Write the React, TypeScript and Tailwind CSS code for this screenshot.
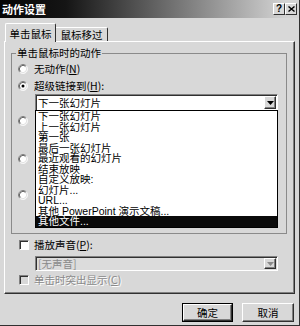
import React from "react";

const Radio = ({ checked }: { checked?: boolean }) => (
  <svg width="10" height="10" viewBox="0 0 12 12" className="shrink-0">
    <circle cx="6" cy="6" r="5" fill="#fff" />
    <path d="M2.11 9.89 A5.5 5.5 0 0 1 9.89 2.11" stroke="#808080" fill="none" strokeWidth="1" />
    <path d="M9.89 2.11 A5.5 5.5 0 0 1 2.11 9.89" stroke="#ffffff" fill="none" strokeWidth="1" />
    <path d="M2.82 9.18 A4.5 4.5 0 0 1 9.18 2.82" stroke="#303030" fill="none" strokeWidth="1" />
    <path d="M9.18 2.82 A4.5 4.5 0 0 1 2.82 9.18" stroke="#d8d8d8" fill="none" strokeWidth="1" />
    {checked && <circle cx="6" cy="6" r="1.8" fill="#000" />}
  </svg>
);

const Check = ({ disabled }: { disabled?: boolean }) => (
  <div
    className={`w-[10px] h-[10px] shrink-0 border-t border-l border-[#808080] border-r border-b border-r-white border-b-white shadow-[inset_1px_1px_0_#303030] ${
      disabled ? "bg-[#d8d8d8]" : "bg-white"
    }`}
  />
);

const Arrow = ({ color }: { color: string }) => (
  <svg width="7" height="4" viewBox="0 0 7 4">
    <path d="M0 0 H7 L3.5 4 Z" fill={color} />
  </svg>
);

const DropBtn = ({ disabled }: { disabled?: boolean }) => (
  <div className="w-[12px] h-full bg-[#d8d8d8] border-t border-l border-white border-r border-b border-r-[#303030] border-b-[#303030] shadow-[inset_-1px_-1px_0_#808080] flex items-center justify-center">
    <Arrow color={disabled ? "#8a8a8a" : "#000"} />
  </div>
);

const items = [
  "下一张幻灯片",
  "上一张幻灯片",
  "第一张",
  "最后一张幻灯片",
  "最近观看的幻灯片",
  "结束放映",
  "自定义放映:",
  "幻灯片...",
  "URL...",
  "其他 PowerPoint 演示文稿...",
  "其他文件...",
];

export default function App() {
  return (
    <div className="w-[300px] h-[326px] bg-[#d8d8d8] flex flex-col font-['Noto_Sans_CJK_SC',sans-serif] text-[10.5px] leading-[12px] text-black border-r border-b border-[#303030] overflow-hidden">
      {/* Title bar */}
      <div className="h-[18px] shrink-0 flex items-center justify-between pl-[2px] pr-[2px] bg-[linear-gradient(to_right,#050505_0%,#151515_22%,#d4d4d4_96%)]">
        <span className="text-white font-bold text-[11px] leading-[12px]">动作设置</span>
        <div className="flex gap-[0px]">
          <div className="w-[12px] h-[12px] bg-[#d8d8d8] border-t border-l border-white border-r border-b border-r-[#303030] border-b-[#303030] flex items-center justify-center font-bold text-[10px] leading-[10px] font-['Liberation_Sans',sans-serif]">
            ?
          </div>
          <div className="w-[12px] h-[12px] bg-[#d8d8d8] border-t border-l border-white border-r border-b border-r-[#303030] border-b-[#303030] flex items-center justify-center">
            <svg width="7" height="6" viewBox="0 0 7 6">
              <path d="M0.5 0.5 L6.5 5.5 M6.5 0.5 L0.5 5.5" stroke="#000" strokeWidth="1.4" />
            </svg>
          </div>
        </div>
      </div>

      {/* Body */}
      <div className="flex-1 flex flex-col pl-[4px] pr-[4px] pt-[5px]">
        {/* Tabs */}
        <div className="h-[18px] flex items-end pl-[1px]">
          <div className="relative z-10 w-[51px] h-[19px] -mb-px bg-[#d8d8d8] border-t border-l border-white border-r border-r-[#303030] rounded-t-[2px] flex items-start justify-center pt-[4px]">
            单击鼠标
          </div>
          <div className="w-[52px] h-[14px] bg-[#d8d8d8] border-t border-white border-r border-r-[#303030] rounded-tr-[2px] flex items-start justify-center pt-[1px]">
            鼠标移过
          </div>
        </div>

        {/* Panel */}
        <div className="h-[253px] border-t border-l border-white border-r border-b border-r-[#303030] border-b-[#303030] shadow-[inset_-1px_-1px_0_#808080] pt-[5px] pl-[6px] pr-[7px] flex flex-col">
          <fieldset className="h-[187px] border border-[#8a8a8a] px-[6px] pt-[2px]">
            <legend className="px-[1px] -ml-[2px] leading-[12px]">单击鼠标时的动作</legend>
            <div className="h-[16px] flex items-center gap-[6px]">
              <Radio />
              <span>
                无动作(<span className="underline">N</span>)
              </span>
            </div>
            <div className="h-[17px] flex items-center gap-[6px]">
              <Radio checked />
              <span>
                超级链接到(<span className="underline">H</span>):
              </span>
            </div>
            <div className="relative ml-[17px] w-[243px] h-[17px] bg-white border-t border-l border-[#808080] border-r border-b border-r-white border-b-white shadow-[inset_1px_1px_0_#303030] flex items-stretch pt-[1px] pb-px pl-[2px] pr-[1px]">
              <div className="flex-1 flex items-center">下一张幻灯片</div>
              <DropBtn />
              <div className="absolute left-[-1px] top-full z-10 w-[243px] bg-white border border-black flex flex-col font-['Liberation_Sans','Noto_Sans_CJK_SC',sans-serif]">
                {items.map((t, i) => (
                  <div
                    key={t}
                    className={`h-[10.5px] leading-[10.5px] pl-[2px] whitespace-nowrap ${
                      i === items.length - 1 ? "bg-[#0a0a0a] text-white" : ""
                    }`}
                  >
                    {t}
                  </div>
                ))}
              </div>
            </div>
            <div className="mt-[2px] h-[16px] flex items-center">
              <Radio />
            </div>
            <div className="h-[22px]" />
            <div className="h-[16px] flex items-center">
              <Radio />
            </div>
            <div className="h-[20px]" />
            <div className="h-[16px] flex items-center">
              <Radio />
            </div>
          </fieldset>

          <div className="mt-[3px] h-[16px] flex items-center gap-[5px] pl-[8px]">
            <Check />
            <span>
              播放声音(<span className="underline">P</span>):
            </span>
          </div>
          <div className="mt-[3px] ml-[24px] w-[243px] h-[15px] bg-[#dcdcdc] border-t border-l border-[#808080] border-r border-b border-r-white border-b-white shadow-[inset_1px_1px_0_#303030] flex items-stretch pt-[1px] pb-px pl-[2px] pr-[1px]">
            <div className="flex-1 flex items-center text-[#8a8a8a]">[无声音]</div>
            <DropBtn disabled />
          </div>
          <div className="mt-[1px] h-[16px] flex items-center gap-[5px] pl-[8px]">
            <Check disabled />
            <span className="text-[#8a8a8a] [text-shadow:1px_1px_0_#fff]">
              单击时突出显示(<span className="underline">C</span>)
            </span>
          </div>
        </div>

        {/* Buttons */}
        <div className="mt-[9px] flex justify-end gap-[9px] pr-[1px]">
          <div className="w-[51px] h-[19px] border border-black">
            <div className="w-full h-full bg-[#d8d8d8] border-t border-l border-white border-r border-b border-r-[#303030] border-b-[#303030] shadow-[inset_-1px_-1px_0_#808080] flex items-center justify-center">
              确定
            </div>
          </div>
          <div className="w-[52px] h-[19px] bg-[#d8d8d8] border-t border-l border-white border-r border-b border-r-[#303030] border-b-[#303030] shadow-[inset_-1px_-1px_0_#808080] flex items-center justify-center">
            取消
          </div>
        </div>
      </div>
    </div>
  );
}
